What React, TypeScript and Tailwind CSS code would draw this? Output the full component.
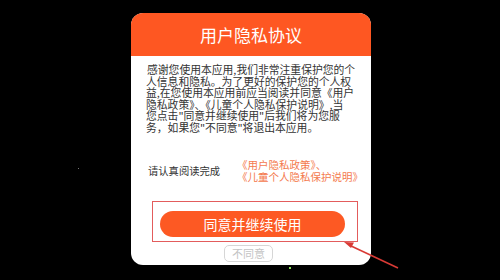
import React from "react";

const font = { fontFamily: '"Noto Sans CJK SC", "Noto Sans", sans-serif' };

export default function App() {
  return (
    <div
      className="relative w-[500px] h-[280px] bg-black overflow-hidden pt-[13px]"
      style={font}
    >
      <div className="relative ml-[131px] w-[240px] h-[252px] bg-white rounded-[12px] overflow-hidden flex flex-col">
        <div className="h-[43px] bg-[#fe5722] flex items-center justify-center text-white text-[17px] leading-none">
          用户隐私协议
        </div>
        <div className="pl-[15px] pt-[8px] text-[10.8px] leading-[11.6px] text-[#333] whitespace-nowrap">
          <div className="pl-[1px]">感谢您使用本应用,我们非常注重保护您的个</div>
          <div>人信息和隐私。为了更好的保护您的个人权</div>
          <div>益,在您使用本应用前应当阅读并同意《用户</div>
          <div>隐私政策》、《儿童个人隐私保护说明》,当</div>
          <div>您点击"同意并继续使用"后我们将为您服</div>
          <div>务，如果您"不同意"将退出本应用。</div>
        </div>
        <div className="mt-[25px] ml-[17px] flex items-center whitespace-nowrap">
          <div className="text-[10.3px] leading-[12px] text-[#333] w-[89px]">请认真阅读完成</div>
          <div className="text-[10.5px] leading-[12px] text-[#f47a4e]">
            <div>《用户隐私政策》、</div>
            <div>《儿童个人隐私保护说明》</div>
          </div>
        </div>
        <div className="mt-[28px] ml-[29px] w-[185px] h-[26px] rounded-full bg-[#fd5923] flex items-center justify-center text-white text-[14px] leading-none">
          同意并继续使用
        </div>
        <div className="mt-[8px] ml-[93px] w-[49px] h-[17px] rounded-[5px] border border-[#d6d6d6] flex items-center justify-center text-[11px] leading-none text-[#c4c4c4]">
          不同意
        </div>
        <div className="absolute left-[21px] top-[188px] w-[206px] h-[41px] border-[1.5px] border-[#e35c5c]" />
      </div>
      <svg className="absolute left-0 top-0" width="500" height="280" viewBox="0 0 500 280">
        <line x1="349" y1="245" x2="398" y2="268" stroke="#d93a35" strokeWidth="1.6" />
        <polygon points="344,242 354,242.5 351,248" fill="#d93a35" />
      </svg>
      <div className="absolute left-[289px] top-[267px] w-[2px] h-[2px] bg-[#8be05a]" />
      <div className="absolute left-[78px] top-[168px] w-[1px] h-[1px] bg-[#777]" />
    </div>
  );
}
